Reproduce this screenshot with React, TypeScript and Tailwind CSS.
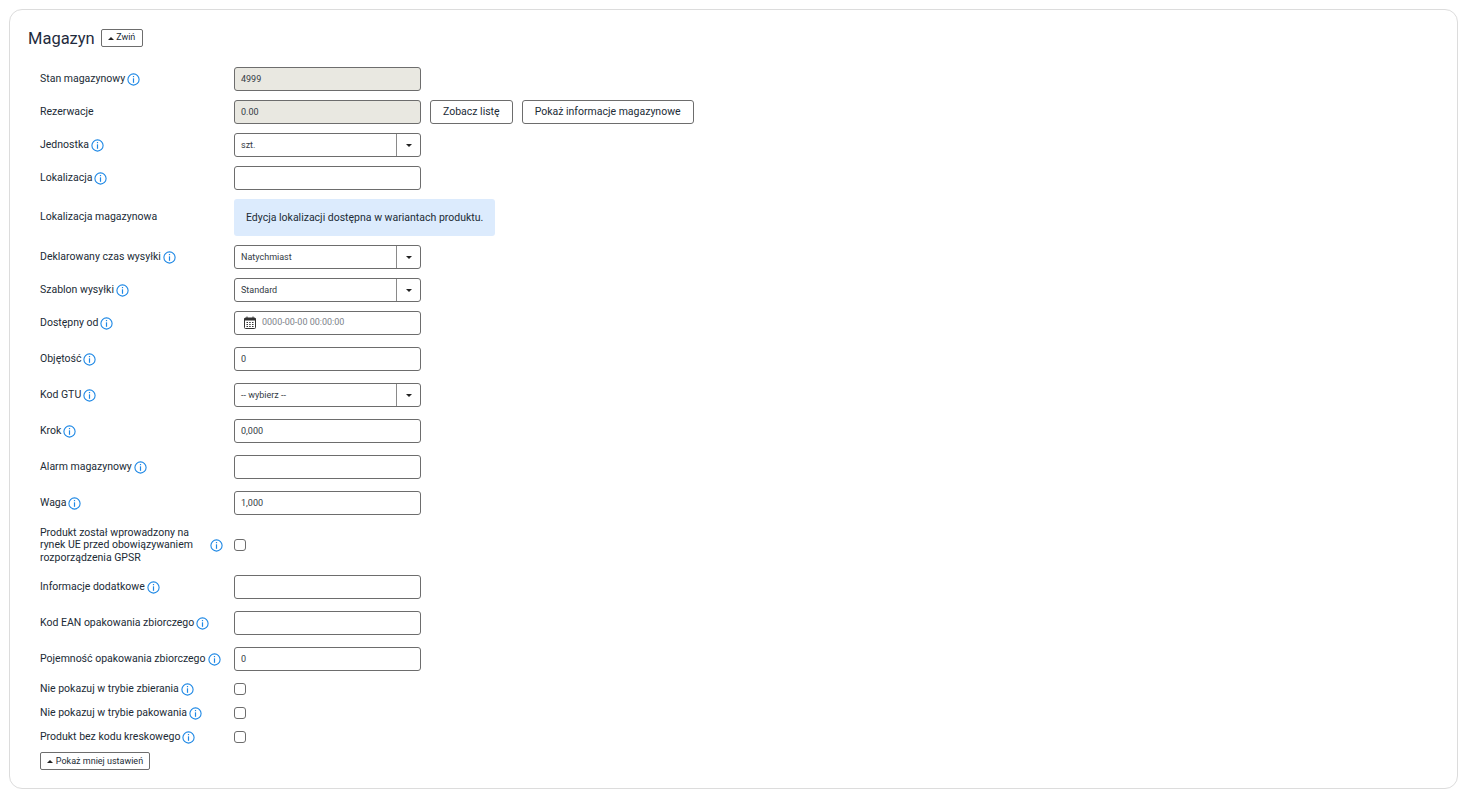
import React from "react";

function Info() {
  return (
    <svg width="13" height="13" viewBox="0 0 13 13" className="shrink-0 ml-[2px]" fill="none">
      <circle cx="6.5" cy="6.5" r="5.6" stroke="#1e88e5" strokeWidth="1.1" />
      <rect x="5.9" y="3" width="1.2" height="1.2" fill="#1e88e5" />
      <path d="M6.5 5.3V9.8" stroke="#1e88e5" strokeWidth="1.2" />
    </svg>
  );
}

function Caret({ className = "" }: { className?: string }) {
  return <span className={"block w-0 h-0 border-l-[3.5px] border-r-[3.5px] border-l-transparent border-r-transparent " + className} />;
}

function Row({ label, info = true, mb, h = "h-6", children }: { label: React.ReactNode; info?: boolean; mb: string; h?: string; children: React.ReactNode }) {
  return (
    <div className={"flex items-center " + h + " " + mb}>
      <div className="w-[194px] shrink-0 flex items-center text-[10.5px] leading-[13px] text-[#212b36]">
        <span className="-mt-[2px]">{label}</span>
        {info && <Info />}
      </div>
      {children}
    </div>
  );
}

function Input({ value = "", disabled = false }: { value?: string; disabled?: boolean }) {
  return (
    <div className={"w-[187px] h-6 shrink-0 border border-[#6d6d6d] rounded-[3px] px-[6px] pt-[1px] flex items-center text-[9px] text-[#333b44] " + (disabled ? "bg-[#e9e8e1]" : "bg-white")}>
      {value}
    </div>
  );
}

function Select({ value }: { value: string }) {
  return (
    <div className="w-[187px] h-6 shrink-0 border border-[#6d6d6d] rounded-[3px] bg-white flex items-center text-[9px] text-[#333b44]">
      <span className="flex-1 px-[6px] pt-[1px]">{value}</span>
      <span className="w-6 h-full border-l border-[#8a8a8a] flex items-center justify-center">
        <Caret className="border-t-[3.5px] border-t-[#222]" />
      </span>
    </div>
  );
}

function Checkbox() {
  return <span className="block w-3 h-3 border border-[#6d6d6d] rounded-[3px] bg-white" />;
}

function Button({ children }: { children: React.ReactNode }) {
  return (
    <button className="h-6 border border-[#6d6d6d] rounded-[3px] bg-white px-3 text-[10.5px] text-[#212b36] whitespace-nowrap">
      {children}
    </button>
  );
}

export default function App() {
  return (
    <div className="w-[1467px] h-[798px] bg-white p-[9px] overflow-hidden font-['Roboto',sans-serif]">
      <div className="w-[1449px] h-[780px] border border-[#dcdcdc] rounded-[13px] pl-[18px] pt-[19px]">
        <div className="flex items-center h-[18px] mb-[20px]">
          <span className="text-[16.5px] leading-[18px] pt-[1px] text-[#1f2b3d] mr-[6px]">Magazyn</span>
          <button className="h-[18px] w-[42px] border border-[#6d6d6d] rounded-[2px] flex items-center justify-center gap-[2px] text-[9px] text-[#212b36]">
            <Caret className="border-b-[3px] border-b-[#222]" />
            Zwiń
          </button>
        </div>
        <div className="pl-[12px]">
          <Row label="Stan magazynowy" mb="mb-[9px]"><Input value="4999" disabled /></Row>
          <Row label="Rezerwacje" info={false} mb="mb-[9px]">
            <Input value="0.00" disabled />
            <div className="flex gap-[9px] ml-[9px]">
              <Button>Zobacz listę</Button>
              <Button>Pokaż informacje magazynowe</Button>
            </div>
          </Row>
          <Row label="Jednostka" mb="mb-[9px]"><Select value="szt." /></Row>
          <Row label="Lokalizacja" mb="mb-[9px]"><Input /></Row>
          <Row label="Lokalizacja magazynowa" info={false} mb="mb-[9px]" h="h-[37px]">
            <div className="w-[261px] h-[37px] bg-[#dcebfd] rounded-[3px] pl-3 flex items-center text-[10.5px] text-[#212b36]">
              Edycja lokalizacji dostępna w wariantach produktu.
            </div>
          </Row>
          <Row label="Deklarowany czas wysyłki" mb="mb-[9px]"><Select value="Natychmiast" /></Row>
          <Row label="Szablon wysyłki" mb="mb-[9px]"><Select value="Standard" /></Row>
          <Row label="Dostępny od" mb="mb-[12px]">
            <div className="w-[187px] h-6 border border-[#6d6d6d] rounded-[3px] bg-white flex items-center pl-[9px] text-[9px] text-[#7d838a]">
              <svg width="12" height="13" viewBox="0 0 12 13" className="mr-[6px] -mt-[1px]" fill="none">
                <rect x="0.5" y="2" width="11" height="10.5" rx="1" stroke="#333" strokeWidth="1" />
                <rect x="0.5" y="2" width="11" height="2.5" fill="#333" />
                <path d="M3 0.5V3M9 0.5V3" stroke="#333" strokeWidth="1" />
                <path d="M2.5 6.5h1.5M5.2 6.5h1.5M8 6.5h1.5M2.5 8.5h1.5M5.2 8.5h1.5M8 8.5h1.5M2.5 10.5h1.5M5.2 10.5h1.5M8 10.5h1.5" stroke="#333" strokeWidth="1" />
              </svg>
              0000-00-00 00:00:00
            </div>
          </Row>
          <Row label="Objętość" mb="mb-[12px]"><Input value="0" /></Row>
          <Row label="Kod GTU" mb="mb-[12px]"><Select value="-- wybierz --" /></Row>
          <Row label="Krok" mb="mb-[12px]"><Input value="0,000" /></Row>
          <Row label="Alarm magazynowy" mb="mb-[12px]"><Input /></Row>
          <Row label="Waga" mb="mb-[11px]"><Input value="1,000" /></Row>
          <div className="flex items-center h-[38px] mb-[11px]">
            <div className="w-[194px] shrink-0 flex items-center text-[10.5px] leading-[12.5px] text-[#212b36]">
              <span className="w-[168px] pt-[1px]">Produkt został wprowadzony na rynek UE przed obowiązywaniem rozporządzenia GPSR</span>
              <Info />
            </div>
            <Checkbox />
          </div>
          <Row label="Informacje dodatkowe" mb="mb-[12px]"><Input /></Row>
          <Row label="Kod EAN opakowania zbiorczego" mb="mb-[12px]"><Input /></Row>
          <Row label="Pojemność opakowania zbiorczego" mb="mb-[6px]"><Input value="0" /></Row>
          <Row label="Nie pokazuj w trybie zbierania" mb=""><Checkbox /></Row>
          <Row label="Nie pokazuj w trybie pakowania" mb=""><Checkbox /></Row>
          <Row label="Produkt bez kodu kreskowego" mb="mb-[3px]"><Checkbox /></Row>
          <button className="h-[18px] w-[110px] border border-[#6d6d6d] rounded-[2px] pt-[1px] flex items-center justify-center gap-[3px] text-[9px] text-[#212b36]">
            <Caret className="border-b-[3px] border-b-[#222]" />
            Pokaż mniej ustawień
          </button>
        </div>
      </div>
    </div>
  );
}
